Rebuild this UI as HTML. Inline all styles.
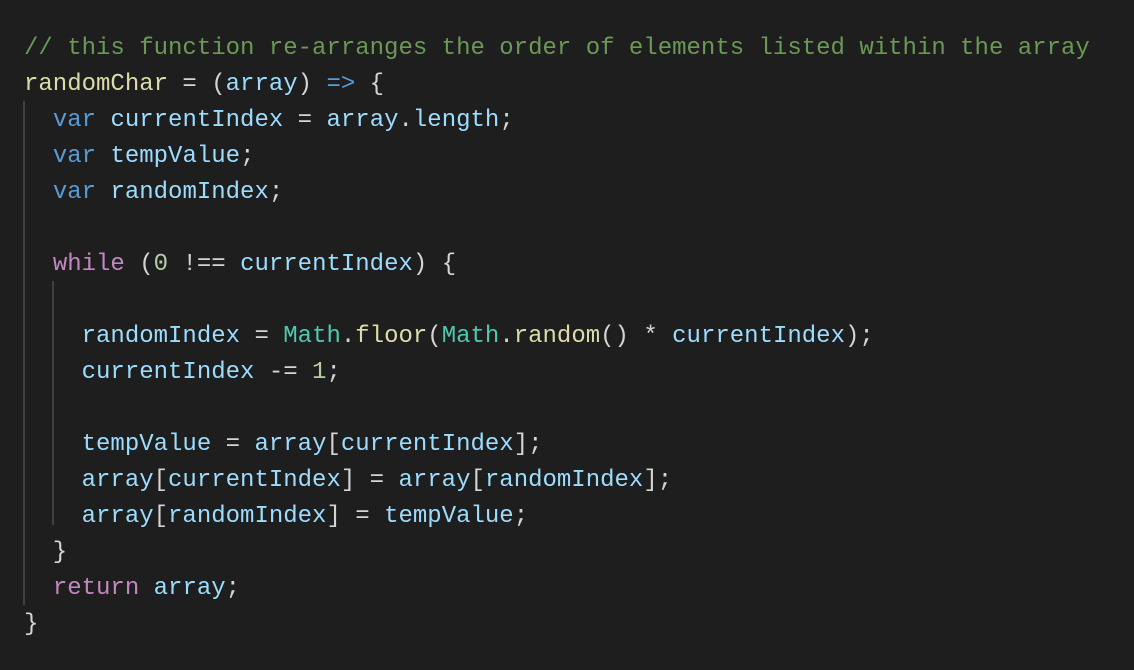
<!DOCTYPE html>
<html><head><meta charset="utf-8"><style>
html,body{margin:0;padding:0;background:#1e1e1e;width:1134px;height:670px;overflow:hidden}
pre{position:absolute;left:24px;top:31px;margin:0;font-family:"Liberation Mono",monospace;font-size:24px;line-height:36px;color:#d4d4d4;white-space:pre}
.c{color:#6a9955}.f{color:#dcdcaa}.v{color:#9cdcfe}.k{color:#569cd6}.p{color:#c586c0}.t{color:#4ec9b0}.n{color:#b5cea8}
.g{position:absolute;width:2px;background:#404040}
</style></head><body>
<div class="g" style="left:23px;top:101px;height:504px"></div>
<div class="g" style="left:52px;top:281px;height:244px"></div>
<pre><span class="c">// this function re-arranges the order of elements listed within the array</span>
<span class="f">randomChar</span> = (<span class="v">array</span>) <span class="k">=&gt;</span> {
  <span class="k">var</span> <span class="v">currentIndex</span> = <span class="v">array</span>.<span class="v">length</span>;
  <span class="k">var</span> <span class="v">tempValue</span>;
  <span class="k">var</span> <span class="v">randomIndex</span>;

  <span class="p">while</span> (<span class="n">0</span> !== <span class="v">currentIndex</span>) {

    <span class="v">randomIndex</span> = <span class="t">Math</span>.<span class="f">floor</span>(<span class="t">Math</span>.<span class="f">random</span>() * <span class="v">currentIndex</span>);
    <span class="v">currentIndex</span> -= <span class="n">1</span>;

    <span class="v">tempValue</span> = <span class="v">array</span>[<span class="v">currentIndex</span>];
    <span class="v">array</span>[<span class="v">currentIndex</span>] = <span class="v">array</span>[<span class="v">randomIndex</span>];
    <span class="v">array</span>[<span class="v">randomIndex</span>] = <span class="v">tempValue</span>;
  }
  <span class="p">return</span> <span class="v">array</span>;
}</pre>
</body></html>
